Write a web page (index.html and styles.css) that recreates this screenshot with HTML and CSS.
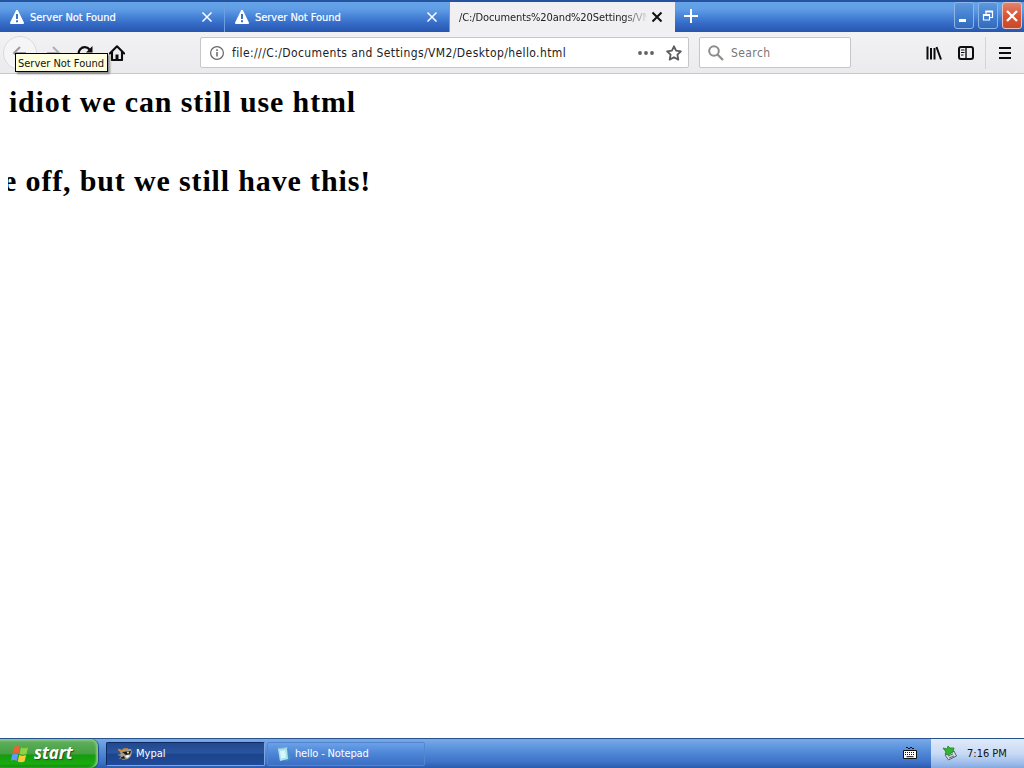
FILE: index.html
```html
<!DOCTYPE html>
<html lang="en">
<head>
<meta charset="utf-8">
<title>hello.html</title>
<link rel="stylesheet" href="styles.css">
</head>
<body>
<header class="tabbar">
  <div class="tab">
    <svg class="warn" width="16" height="16" viewBox="0 0 16 16"><path d="M8 1.800 14 14H2Z" fill="#fff" stroke="#fff" stroke-width="2" stroke-linejoin="round"/><path d="M8 5v5M8 11.300v1.900" stroke="#3768c0" stroke-width="1.900"/></svg>
    <span class="tab-title t1">Server Not Found</span>
    <svg class="x" width="12" height="12" viewBox="0 0 12 12"><path d="M1.500 1.500l9 9M10.500 1.500l-9 9" stroke="#fff" stroke-width="1.500"/></svg>
  </div>
  <div class="tab">
    <svg class="warn" width="16" height="16" viewBox="0 0 16 16"><path d="M8 1.800 14 14H2Z" fill="#fff" stroke="#fff" stroke-width="2" stroke-linejoin="round"/><path d="M8 5v5M8 11.300v1.900" stroke="#3768c0" stroke-width="1.900"/></svg>
    <span class="tab-title t1">Server Not Found</span>
    <svg class="x" width="12" height="12" viewBox="0 0 12 12"><path d="M1.500 1.500l9 9M10.500 1.500l-9 9" stroke="#fff" stroke-width="1.500"/></svg>
  </div>
  <div class="tab active">
    <span class="tab-title t2">/C:/Documents%20and%20Settings/VM2</span>
    <svg class="x" width="12" height="12" viewBox="0 0 12 12"><path d="M1.500 1.500l9 9M10.500 1.500l-9 9" stroke="#111" stroke-width="2"/></svg>
  </div>
  <svg class="plus" width="14" height="14" viewBox="0 0 14 14"><path d="M7 0v14M0 7h14" stroke="#fff" stroke-width="2"/></svg>
  <div class="winbtns">
    <div class="wb"><svg width="18" height="24" viewBox="0 0 18 24"><path d="M4 16.500h7" stroke="#fff" stroke-width="3"/></svg></div>
    <div class="wb"><svg width="18" height="24" viewBox="0 0 18 24"><path d="M7 10V7.500h6.500v6H11M4.500 10.500h6v5.500h-6z" fill="none" stroke="#fff" stroke-width="1.200"/><path d="M6.500 7.500h7.500M4 11h7" stroke="#fff" stroke-width="1.800"/></svg></div>
    <div class="wb close"><svg width="18" height="24" viewBox="0 0 18 24"><path d="M4 7l10 10M14 7L4 17" stroke="#fff" stroke-width="2.300"/></svg></div>
  </div>
</header>
<nav class="toolbar">
  <div class="navbtns">
    <div class="back"><svg width="16" height="16" viewBox="0 0 16 16"><path d="M15 8H3M9 2L3 8l6 6" fill="none" stroke="#9a9aa0" stroke-width="2"/></svg></div>
    <svg class="fwd" width="16" height="16" viewBox="0 0 16 16"><path d="M1 8h12M7 2l6 6-6 6" fill="none" stroke="#b0b0b4" stroke-width="2"/></svg>
    <svg class="reload" width="16" height="16" viewBox="0 0 16 16"><path d="M13.500 10A6 6 0 1 1 12.500 4.500" fill="none" stroke="#0c0c0d" stroke-width="2.200"/><path d="M15.500 1v6.500H9z" fill="#0c0c0d"/></svg>
    <svg class="home" width="16" height="16" viewBox="0 0 16 16"><path d="M.8 8.500 8 1.300l7.200 7.200M3 7v8h10V7" fill="none" stroke="#0c0c0d" stroke-width="2.100" stroke-linejoin="round" stroke-linecap="round"/><path d="M6.500 15V9.500h3V15z" fill="#0c0c0d"/></svg>
    <div class="tooltip"><span>Server Not Found</span></div>
  </div>
  <div class="urlbar">
    <svg class="info" width="14" height="14" viewBox="0 0 14 14"><circle cx="7" cy="7" r="6.400" fill="none" stroke="#666" stroke-width="1.200"/><path d="M7 6v4.500M7 3.300v1.600" stroke="#666" stroke-width="1.500"/></svg>
    <span class="url">file:///C:/Documents and Settings/VM2/Desktop/hello.html</span>
    <svg class="dots" width="16" height="4" viewBox="0 0 16 4"><g fill="#606064"><circle cx="2" cy="2" r="1.900"/><circle cx="8" cy="2" r="1.900"/><circle cx="14" cy="2" r="1.900"/></g></svg>
    <svg class="star" width="16" height="16" viewBox="0 0 16 16"><path d="M8 1.300l2.100 4.400 4.800.6-3.500 3.400.9 4.900L8 12.200l-4.300 2.400.9-4.900L1.100 6.300l4.800-.6z" fill="none" stroke="#5c5c60" stroke-width="1.800" stroke-linejoin="round"/></svg>
  </div>
  <div class="search">
    <svg width="16" height="16" viewBox="0 0 16 16"><circle cx="6" cy="6" r="4.800" fill="none" stroke="#8c8c8c" stroke-width="2"/><path d="M9.500 9.500l5.500 5.500" stroke="#8c8c8c" stroke-width="2.200"/></svg>
    <span class="ph">Search</span>
  </div>
  <svg class="library" width="16" height="16" viewBox="0 0 16 16"><path d="M1.500 1.500v13M5 3v11.500M8.500 3v11.500M10.500 2l4.500 12.500" stroke="#0c0c0d" stroke-width="2"/></svg>
  <svg class="sidebar" width="16" height="14" viewBox="0 0 16 14"><rect x="1" y="1" width="14" height="12" rx="2" fill="none" stroke="#0c0c0d" stroke-width="2"/><path d="M8 1v12" stroke="#0c0c0d" stroke-width="1.400"/><path d="M3 4h3.500M3 6.500h3.500M3 9h2.500" stroke="#0c0c0d"/></svg>
  <div class="sep"></div>
  <svg class="menu" width="12" height="12" viewBox="0 0 12 12"><path d="M0 1h12M0 6h12M0 11h12" stroke="#0c0c0d" stroke-width="2"/></svg>
</nav>
<main class="page">
  <h1 class="scroll line1"><span>idiot we can still use html</span></h1>
  <h1 class="scroll line2"><span>e off, but we still have this!</span></h1>
</main>
<footer class="taskbar">
  <div class="start">
    <svg width="20" height="20" viewBox="0 0 20 20"><path d="M4 3Q7 1 10 3L8.500 9.500Q5.500 8 2.500 9.500z" fill="#ee6035"/><path d="M11 3.500Q14 5 18 3.500L16.500 10Q13 11.500 9.500 10z" fill="#8ed343"/><path d="M2.200 10.500Q5.500 9 8.200 10.500L6.700 17Q3.500 15 .8 17z" fill="#609cf0"/><path d="M9.200 11Q12.500 12.500 16.200 11L14.500 17.500Q11 19 7.700 17.500z" fill="#f7cc3b"/></svg>
    <span class="start-text">start</span>
  </div>
  <div class="task pressed">
    <svg width="16" height="16" viewBox="0 0 16 16"><path d="M1 3l4 1 3-1 6 0 1 3-1 4-3 3-6 1 1-2-4 1 2-3-4-1 4-1z" fill="#a99b83"/><path d="M5 6l9-1-1 3-4 1zM3 12l4-2 1 3z" fill="#181818"/><path d="M1 3.500l4 1.500 2-2 4 0" fill="none" stroke="#d08a30" stroke-width="1.500"/><path d="M8 10l3-1 2 1-3 2z" fill="#fff"/><circle cx="11" cy="6.500" r=".9" fill="#ffd"/></svg>
    <span class="tk1">Mypal</span>
  </div>
  <div class="task">
    <svg width="16" height="16" viewBox="0 0 16 16"><path d="M3 2l9-1 3 11-3 3-9-1z" fill="#438fc0"/><path d="M2 3l9-1 1 11-8 2z" fill="#a8e3ef"/><path d="M4 5l5-.5 1 7-5 1z" fill="#d6f6fa"/><path d="M2.500 2.500l9-1" stroke="#d9e0cf" stroke-dasharray="1 1"/></svg>
    <span class="tk2">hello - Notepad</span>
  </div>
  <svg class="kbd" width="14" height="14" viewBox="0 0 14 14"><path d="M3 3q1-2 2 0t2 0 2 0 2 0" fill="none" stroke="#112"/><path d="M.5 5.500h13v8H.5z" fill="#fff" stroke="#111"/><path d="M2 7.500h10M2 9.500h10" stroke="#111" stroke-width="1.200" stroke-dasharray="1 1"/><path d="M3.500 11.700h7" stroke="#111"/></svg>
  <div class="tray">
    <svg width="16" height="16" viewBox="0 0 16 16"><path d="M3 10l9-4 2.500 5-8 4z" fill="#d2dce2" stroke="#526674"/><path d="M6 11l5-2M7 13l5-2" stroke="#526674"/><path d="M1 3l4 1 1-3 2 2 4 0-1 4-5 3-3-1 1-2z" fill="#35b530" stroke="#237d2a" stroke-width=".8"/></svg>
    <span class="clock">7:16 PM</span>
  </div>
</footer>
</body>
</html>
```
FILE: styles.css
```css
* { box-sizing: border-box; }
body {
  margin: 0;
  width: 1024px;
  height: 768px;
  overflow: hidden;
  display: flex;
  flex-direction: column;
  background: #fff;
  font-family: "DejaVu Sans Condensed", "DejaVu Sans", sans-serif;
  font-stretch: condensed;
  font-size: 11px;
  white-space: nowrap;
}
svg { display: block; flex: none; }

.tabbar {
  height: 32px;
  flex: none;
  display: flex;
  border-top: 2px solid #2553a0;
  background: linear-gradient(#65a4e9 0, #5f9ce5 25%, #4682d6 50%, #356bc8 72%, #2855ad 100%);
}
.tab {
  width: 225px;
  height: 30px;
  padding: 0 11px 0 9px;
  display: flex;
  align-items: center;
  border-right: 1px solid #6ca0e2;
  color: #fff;
}
.tab-title { flex: 1; overflow: hidden; }
.t1 { margin-left: 5px; letter-spacing: -0.03px; -webkit-text-stroke: 0.2px #fff; }
.active {
  background: #f0eff2;
  color: #222;
  border-right: 0;
  padding-right: 12px;
}
.t2 {
  letter-spacing: -0.1px;
  margin-right: 5px;
  -webkit-mask-image: linear-gradient(to right, #000 165px, transparent 190px);
  mask-image: linear-gradient(to right, #000 165px, transparent 190px);
}
.plus { margin: 7px 0 0 9px; }
.winbtns { display: flex; gap: 4px; margin: 0 2px 0 auto; }
.wb {
  width: 20px;
  height: 27px;
  border: 1px solid #8fb5e6;
  border-radius: 3px;
  display: flex;
  align-items: center;
  justify-content: center;
  background: linear-gradient(#5c98de, #4580d0 50%, #326bbd);
}
.close { background: linear-gradient(#df8572, #dc5534 50%, #c64a2b); border-color: #ecbfb8; }

.toolbar {
  height: 42px;
  flex: none;
  display: flex;
  align-items: center;
  background: linear-gradient(#f2f1f4, #ebebed);
  border-bottom: 1px solid #c9c9cb;
}
.navbtns { position: relative; width: 200px; height: 41px; display: flex; align-items: center; }
.back {
  width: 34px;
  height: 34px;
  margin-left: 3px;
  border: 1px solid #dadadd;
  border-radius: 50%;
  background: #f5f4f7;
  padding: 8px 7px;
}
.fwd { margin-left: 9px; }
.reload { margin-left: 15px; }
.home { margin-left: 16px; }
.tooltip {
  position: absolute;
  left: 15px;
  top: 21px;
  width: 93px;
  height: 19px;
  border: 1px solid #000;
  background: #ffffe1;
  box-shadow: 2px 2px 2px rgba(0, 0, 0, .4);
  padding-left: 2px;
  line-height: 19px;
  color: #111;
}
.tooltip span { letter-spacing: -0.02px; }
.urlbar {
  width: 489px;
  height: 31px;
  border: 1px solid #c6c6c8;
  border-radius: 2px;
  background: #fff;
  display: flex;
  align-items: center;
  padding: 0 6px 0 9px;
}
.url { flex: 1; margin: 1px 0 0 8px; font-size: 12px; letter-spacing: 0.4px; color: #222; }
.star { margin-left: 12px; }
.search {
  width: 152px;
  height: 31px;
  margin-left: 10px;
  border: 1px solid #c6c6c8;
  border-radius: 2px;
  background: #fff;
  display: flex;
  align-items: center;
  padding-left: 8px;
}
.ph { margin: 1px 0 0 7px; font-size: 12px; letter-spacing: 0.4px; color: #777; }
.library { margin-left: 75px; }
.sidebar { margin-left: 16px; }
.sep { width: 1px; height: 32px; margin-left: 11px; background: #d4d4d6; }
.menu { margin-left: 13px; }

.page { flex: 1; padding: 10px 8px 0; }
.scroll {
  margin: 0 0 43px;
  height: 36px;
  overflow: hidden;
  display: flex;
  justify-content: flex-end;
  font: bold 30px/36px "Liberation Serif", serif;
  letter-spacing: 0.85px;
  color: #000;
}
.line1 { width: 348px; }
.line2 { width: 363px; }

.taskbar {
  height: 30px;
  flex: none;
  display: flex;
  align-items: center;
  border-top: 1px solid #28518e;
  background: linear-gradient(#77aae8 0, #6298e0 25%, #4b82d3 55%, #3d72c7 80%, #2c5aae 100%);
  color: #fff;
}
.start {
  width: 98px;
  height: 29px;
  display: flex;
  align-items: center;
  padding-left: 10px;
  border-radius: 0 8px 8px 0;
  background: linear-gradient(#8fca8f 0, #5cad58 12%, #46a042 50%, #169a10 56%, #18ac0e 85%, #16850f 100%);
  box-shadow: inset -2px 0 2px #85c978, 1px 0 1px #224b8b;
}
.start-text {
  margin: -2px 0 0 4px;
  font: italic bold 17px/22px "Open Sans", sans-serif;
  letter-spacing: -0.1px;
  text-shadow: 1px 1px 1px #255020;
}
.task {
  width: 158px;
  height: 24px;
  margin-left: 2px;
  padding-left: 8px;
  display: flex;
  align-items: center;
  border: 1px solid #5286cf;
  border-radius: 2px;
  background: linear-gradient(#6ba1e8, #4c84d6 50%, #3b6fc4);
}
.task span { margin-left: 3px; }
.tk2 { letter-spacing: -0.15px; }
.pressed {
  width: 159px;
  margin-left: 8px;
  padding-left: 10px;
  border-color: #102a60 #7da7e0 #7da7e0 #102a60;
  background: linear-gradient(#23498f, #2a559f 45%, #1c448e 52%, #204b98);
}
.kbd { margin: -3px 14px 0 auto; }
.tray {
  width: 93px;
  height: 29px;
  display: flex;
  align-items: center;
  padding-left: 11px;
  color: #111;
  background: linear-gradient(#e0eafa, #c8daf4 50%, #9bbbea 85%, #84a9e0);
}
.tray svg { margin-top: -2px; }
.clock { margin-left: 9px; }
```
